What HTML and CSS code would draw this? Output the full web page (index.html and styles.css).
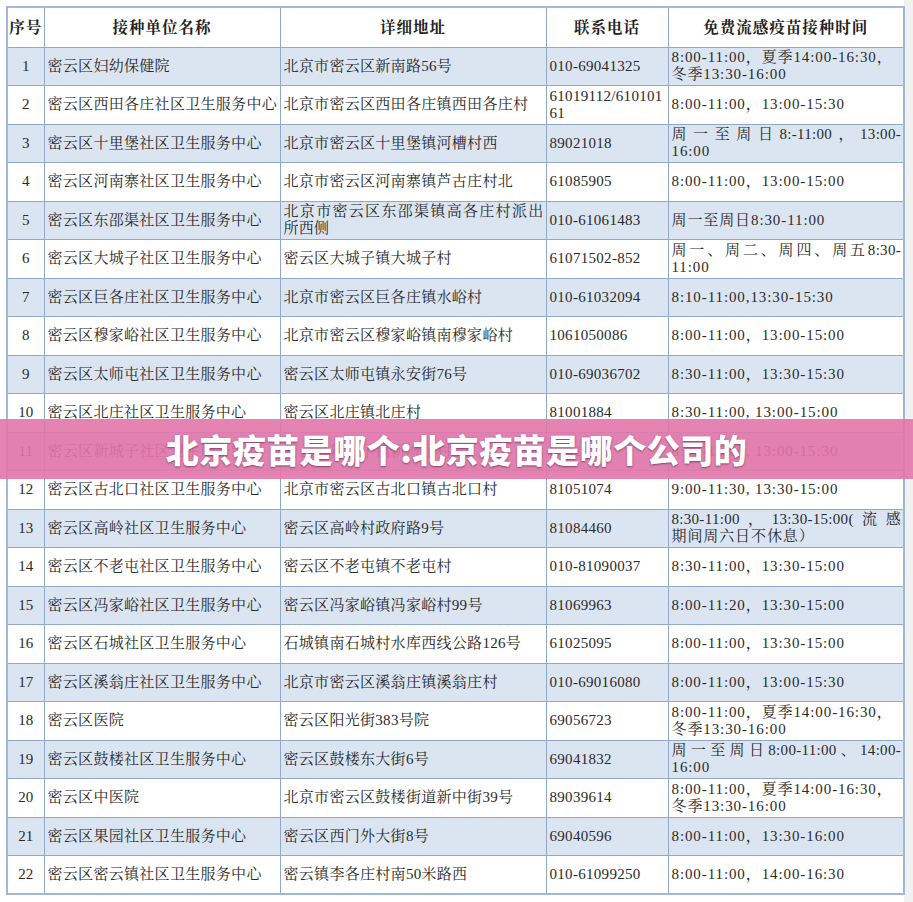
FILE: index.html
```html
<!DOCTYPE html>
<html lang="zh-CN">
<head>
<meta charset="utf-8">
<title>北京疫苗是哪个:北京疫苗是哪个公司的</title>
<link rel="stylesheet" href="styles.css">
</head>
<body>
<div class="page">
  <table class="sched">
    <colgroup>
      <col class="c-no"><col class="c-name"><col class="c-addr"><col class="c-tel"><col class="c-time">
    </colgroup>
    <thead>
      <tr><th>序号</th><th>接种单位名称</th><th>详细地址</th><th>联系电话</th><th>免费流感疫苗接种时间</th></tr>
    </thead>
    <tbody>
      <tr class="alt"><td class="no">1</td><td>密云区妇幼保健院</td><td>北京市密云区新南路56号</td><td>010-69041325</td><td class="time"><span class="ln">8:00-11:00，夏季14:00-16:30，</span><span class="ln">冬季13:30-16:00</span></td></tr>
      <tr><td class="no">2</td><td>密云区西田各庄社区卫生服务中心</td><td>北京市密云区西田各庄镇西田各庄村</td><td><span class="ln">61019112/610101</span><span class="ln">61</span></td><td class="time">8:00-11:00，13:00-15:30</td></tr>
      <tr class="alt"><td class="no">3</td><td>密云区十里堡社区卫生服务中心</td><td>北京市密云区十里堡镇河槽村西</td><td>89021018</td><td class="time"><span class="ln j">周一至周日8:-11:00，13:00-</span><span class="ln">16:00</span></td></tr>
      <tr><td class="no">4</td><td>密云区河南寨社区卫生服务中心</td><td>北京市密云区河南寨镇芦古庄村北</td><td>61085905</td><td class="time">8:00-11:00，13:00-15:00</td></tr>
      <tr class="alt"><td class="no">5</td><td>密云区东邵渠社区卫生服务中心</td><td><span class="ln j">北京市密云区东邵渠镇高各庄村派出</span><span class="ln">所西侧</span></td><td>010-61061483</td><td class="time">周一至周日8:30-11:00</td></tr>
      <tr><td class="no">6</td><td>密云区大城子社区卫生服务中心</td><td>密云区大城子镇大城子村</td><td>61071502-852</td><td class="time"><span class="ln j">周一、周二、周四、周五8:30-</span><span class="ln">11:00</span></td></tr>
      <tr class="alt"><td class="no">7</td><td>密云区巨各庄社区卫生服务中心</td><td>北京市密云区巨各庄镇水峪村</td><td>010-61032094</td><td class="time">8:10-11:00,13:30-15:30</td></tr>
      <tr><td class="no">8</td><td>密云区穆家峪社区卫生服务中心</td><td>北京市密云区穆家峪镇南穆家峪村</td><td>1061050086</td><td class="time">8:00-11:00，13:00-15:00</td></tr>
      <tr class="alt"><td class="no">9</td><td>密云区太师屯社区卫生服务中心</td><td>密云区太师屯镇永安街76号</td><td>010-69036702</td><td class="time">8:30-11:00，13:30-15:30</td></tr>
      <tr><td class="no">10</td><td>密云区北庄社区卫生服务中心</td><td>密云区北庄镇北庄村</td><td>81001884</td><td class="time">8:30-11:00, 13:00-15:00</td></tr>
      <tr class="alt"><td class="no">11</td><td>密云区新城子社区卫生服务中心</td><td>密云区新城子镇新城子村</td><td>81023111</td><td class="time">8:30-11:00, 13:00-15:30</td></tr>
      <tr><td class="no">12</td><td>密云区古北口社区卫生服务中心</td><td>北京市密云区古北口镇古北口村</td><td>81051074</td><td class="time">9:00-11:30, 13:30-15:00</td></tr>
      <tr class="alt"><td class="no">13</td><td>密云区高岭社区卫生服务中心</td><td>密云区高岭村政府路9号</td><td>81084460</td><td class="time"><span class="ln j">8:30-11:00，13:30-15:00(流感</span><span class="ln">期间周六日不休息）</span></td></tr>
      <tr><td class="no">14</td><td>密云区不老屯社区卫生服务中心</td><td>密云区不老屯镇不老屯村</td><td>010-81090037</td><td class="time">8:30-11:00，13:30-15:00</td></tr>
      <tr class="alt"><td class="no">15</td><td>密云区冯家峪社区卫生服务中心</td><td>密云区冯家峪镇冯家峪村99号</td><td>81069963</td><td class="time">8:00-11:20，13:30-15:00</td></tr>
      <tr><td class="no">16</td><td>密云区石城社区卫生服务中心</td><td>石城镇南石城村水库西线公路126号</td><td>61025095</td><td class="time">8:00-11:00，13:30-15:00</td></tr>
      <tr class="alt"><td class="no">17</td><td>密云区溪翁庄社区卫生服务中心</td><td>北京市密云区溪翁庄镇溪翁庄村</td><td>010-69016080</td><td class="time">8:00-11:00，13:00-15:30</td></tr>
      <tr><td class="no">18</td><td>密云区医院</td><td>密云区阳光街383号院</td><td>69056723</td><td class="time"><span class="ln">8:00-11:00，夏季14:00-16:30，</span><span class="ln">冬季13:30-16:00</span></td></tr>
      <tr class="alt"><td class="no">19</td><td>密云区鼓楼社区卫生服务中心</td><td>密云区鼓楼东大街6号</td><td>69041832</td><td class="time"><span class="ln j">周一至周日8:00-11:00、14:00-</span><span class="ln">16:00</span></td></tr>
      <tr><td class="no">20</td><td>密云区中医院</td><td>北京市密云区鼓楼街道新中街39号</td><td>89039614</td><td class="time"><span class="ln">8:00-11:00，夏季14:00-16:30，</span><span class="ln">冬季13:30-16:00</span></td></tr>
      <tr class="alt"><td class="no">21</td><td>密云区果园社区卫生服务中心</td><td>密云区西门外大街8号</td><td>69040596</td><td class="time">8:00-11:00，13:30-16:00</td></tr>
      <tr><td class="no">22</td><td>密云区密云镇社区卫生服务中心</td><td>密云镇李各庄村南50米路西</td><td>010-61099250</td><td class="time">8:00-11:00，14:00-16:30</td></tr>
    </tbody>
  </table>
  <div class="banner"><h1 class="banner-title">北京疫苗是哪个:北京疫苗是哪个公司的</h1></div>
</div>
</body>
</html>
```

FILE: styles.css
```css
html, body {
  margin: 0;
  padding: 0;
  background: #ffffff;
}
body {
  font-family: "Liberation Serif", "Noto Serif CJK SC", "Noto Sans CJK SC", serif;
  color: #2a2a2a;
}
.page {
  position: relative;
  width: 913px;
  height: 902px;
  padding: 6px 0 0 6px;
  box-sizing: border-box;
  background: linear-gradient(to right, #ffffff 0, #ffffff 904px, #f1f1f1 904px);
}
.sched {
  border-collapse: collapse;
  table-layout: fixed;
  width: 897px;
  border: 2px solid #9fb8d6;
  font-size: 15px;
}
.c-no { width: 37px; }
.c-name { width: 236px; }
.c-addr { width: 266px; }
.c-tel { width: 122px; }
.c-time { width: 236px; }
.sched th, .sched td {
  border: 1px solid #8ea9ca;
  padding: 0 2px 0 3px;
  text-align: left;
  vertical-align: middle;
  line-height: 17px;
  letter-spacing: 0.3px;
  white-space: nowrap;
  overflow: hidden;
}
.sched td.time {
  letter-spacing: 0.9px;
}
.sched thead tr { height: 40px; }
.sched tbody tr { height: 38.5px; }
.sched th {
  font-weight: bold;
  text-align: center;
  font-size: 15.5px;
  letter-spacing: 1px;
  padding: 0;
  color: #222;
}
.sched td.no {
  text-align: center;
  padding: 0;
  letter-spacing: 0;
}
.sched tr.alt td {
  background: #dbe5f2;
}
.ln {
  display: block;
}
.ln.j {
  text-align: justify;
  text-align-last: justify;
  white-space: normal;
  letter-spacing: 0.3px;
}
.banner {
  position: absolute;
  left: 0;
  top: 419px;
  width: 913px;
  height: 60px;
  background: rgba(226, 118, 170, 0.9);
  display: flex;
  align-items: center;
  justify-content: center;
}
.banner-title {
  margin: 0;
  font-family: "Noto Sans CJK SC", "Noto Sans", sans-serif;
  font-weight: 900;
  font-size: 33px;
  line-height: 1;
  color: #ffffff;
  letter-spacing: 0.5px;
  text-shadow: 0 1px 2px rgba(80, 20, 50, 0.6);
}
```
